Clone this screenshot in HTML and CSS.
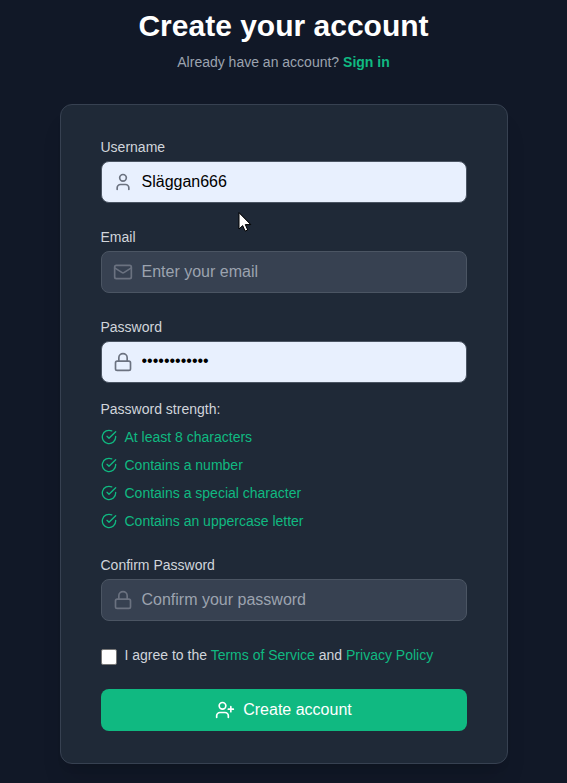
FILE: index.html
```html
<!DOCTYPE html>
<html lang="en">
<head>
<meta charset="utf-8">
<title>Create your account</title>
<link rel="stylesheet" href="styles.css">
</head>
<body>
<svg class="sprite" aria-hidden="true">
  <symbol id="user" viewBox="0 0 24 24"><path d="M19 21v-2a4 4 0 0 0-4-4H9a4 4 0 0 0-4 4v2"/><circle cx="12" cy="7" r="4"/></symbol>
  <symbol id="mail" viewBox="0 0 24 24"><rect width="20" height="16" x="2" y="4" rx="2"/><path d="m22 7-8.97 5.7a1.94 1.94 0 0 1-2.06 0L2 7"/></symbol>
  <symbol id="lock" viewBox="0 0 24 24"><rect width="18" height="11" x="3" y="11" rx="2"/><path d="M7 11V7a5 5 0 0 1 10 0v4"/></symbol>
  <symbol id="check" viewBox="0 0 24 24"><path d="M22 11.08V12a10 10 0 1 1-5.93-9.14"/><path d="m9 11 3 3L22 4"/></symbol>
  <symbol id="user-plus" viewBox="0 0 24 24"><path d="M16 21v-2a4 4 0 0 0-4-4H6a4 4 0 0 0-4 4v2"/><circle cx="9" cy="7" r="4"/><path d="M19 8v6M22 11h-6"/></symbol>
</svg>
<main class="page">
  <h1 class="title">Create your account</h1>
  <p class="subtitle">Already have an account? <a class="signin" href="#">Sign in</a></p>
  <form class="card">
    <div class="field">
      <label for="username">Username</label>
      <div class="control filled"><svg class="icon"><use href="#user"/></svg><input id="username" type="text" value="Släggan666"></div>
    </div>
    <div class="field">
      <label for="email">Email</label>
      <div class="control"><svg class="icon"><use href="#mail"/></svg><input id="email" type="email" placeholder="Enter your email"></div>
    </div>
    <div class="field">
      <label for="password">Password</label>
      <div class="control filled"><svg class="icon"><use href="#lock"/></svg><input id="password" class="masked" type="password" value="aaaaaaaaaaaa"></div>
      <div class="strength">
        <p>Password strength:</p>
        <ul>
          <li><svg><use href="#check"/></svg>At least 8 characters</li>
          <li><svg><use href="#check"/></svg>Contains a number</li>
          <li><svg><use href="#check"/></svg>Contains a special character</li>
          <li><svg><use href="#check"/></svg>Contains an uppercase letter</li>
        </ul>
      </div>
    </div>
    <div class="field">
      <label for="confirm">Confirm Password</label>
      <div class="control"><svg class="icon"><use href="#lock"/></svg><input id="confirm" type="password" placeholder="Confirm your password"></div>
    </div>
    <div class="terms">
      <input id="terms" type="checkbox">
      <label for="terms">I agree to the <a href="#">Terms of Service</a> and <a href="#">Privacy Policy</a></label>
    </div>
    <button class="submit" type="button"><svg class="icon"><use href="#user-plus"/></svg>Create account</button>
  </form>
</main>
<svg class="pointer" width="14" height="21" viewBox="0 0 14 21" aria-hidden="true"><path d="M1 1v16l3.7-3.4 2.4 5.5 2.6-1.1-2.4-5.4h5.1z"/></svg>
</body>
</html>
```

FILE: styles.css
```css
* { box-sizing: border-box; }
body {
  margin: 0;
  height: 783px;
  overflow: hidden;
  background: #111827;
  color: #d1d5db;
  font: 14px/20px "Liberation Sans", Arial, sans-serif;
}
.sprite { position: absolute; width: 0; height: 0; }
svg {
  flex: none;
  fill: none;
  stroke: currentColor;
  stroke-width: 2;
  stroke-linecap: round;
  stroke-linejoin: round;
}
.page { width: 448px; margin: 0 auto; padding-top: 8px; }
.title {
  margin: 0 0 8px;
  color: #fff;
  font-size: 30px;
  line-height: 36px;
  font-weight: 700;
  text-align: center;
}
.subtitle { margin: 0 0 32px; color: #9ca3af; text-align: center; }
a { color: #10b981; text-decoration: none; }
.signin { font-weight: 700; }
.card {
  display: flex;
  flex-direction: column;
  gap: 24px;
  padding: 32px 40px;
  background: #1f2937;
  border: 1px solid #374151;
  border-radius: 12px;
  box-shadow: 0 20px 25px -5px rgba(0, 0, 0, .1), 0 8px 10px -6px rgba(0, 0, 0, .1);
}
.field > label { display: block; margin-bottom: 4px; }
.control {
  display: flex;
  align-items: center;
  gap: 9px;
  height: 42px;
  padding: 0 12px 0 11px;
  color: #6b7280;
  background: #374151;
  border: 1px solid #4b5563;
  border-radius: 8px;
}
.control.filled { background: #e8f0fe; }
.icon { width: 20px; height: 20px; stroke-width: 2; }
.control input {
  flex: 1;
  min-width: 0;
  height: 24px;
  padding: 0;
  border: 0;
  outline: 0;
  background: transparent;
  color: #000;
  font: 16px/24px "Liberation Sans", Arial, sans-serif;
}
.control .masked { padding-bottom: 2px; }
.control input::placeholder { color: #9ca3af; opacity: 1; }
.strength { margin-top: 16px; }
.strength p { margin: 0 0 8px; }
.strength ul {
  display: flex;
  flex-direction: column;
  gap: 8px;
  margin: 0;
  padding: 0;
  list-style: none;
}
.strength li { display: flex; align-items: center; gap: 8px; color: #10b981; }
.strength li svg { width: 16px; height: 16px; }
.terms { display: flex; align-items: center; gap: 8px; height: 20px; }
.terms input {
  appearance: none;
  width: 16px;
  height: 16px;
  margin: 3px 0 0;
  background: #fff;
  border: 1px solid #767676;
  border-radius: 2px;
}
.submit {
  display: flex;
  align-items: center;
  justify-content: center;
  gap: 8px;
  height: 42px;
  padding: 0;
  border: 0;
  border-radius: 8px;
  background: #10b981;
  color: #fff;
  font: 16px/24px "Liberation Sans", Arial, sans-serif;
}
.pointer {
  position: absolute;
  left: 238px;
  top: 212px;
  fill: #fff;
  stroke: #000;
  stroke-width: 1;
}
```
